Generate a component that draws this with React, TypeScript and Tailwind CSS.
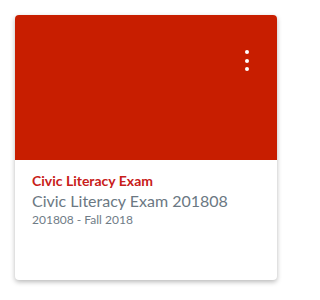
import React from "react";

export default function App() {
  return (
    <div className="w-[300px] h-[300px] bg-white pl-[15px] pt-[15px]" style={{ fontFamily: "Lato, 'Noto Sans', sans-serif" }}>
      <div className="relative w-[262px] h-[265px] rounded-[4px] bg-white overflow-hidden shadow-[0_2px_5px_rgba(0,0,0,0.28)] flex flex-col">
        <div className="h-[145px] bg-[#c81e00] shrink-0"></div>
        <div className="absolute left-[230px] top-[35px] flex flex-col gap-[4.5px]">
          <span className="block w-[4px] h-[4px] rounded-full bg-white"></span>
          <span className="block w-[4px] h-[4px] rounded-full bg-white"></span>
          <span className="block w-[4px] h-[4px] rounded-full bg-white"></span>
        </div>
        <div className="px-[17px] pt-[12px] flex flex-col">
          <div className="text-[14px] leading-[18px] font-bold text-[#c8201a] whitespace-nowrap">Civic Literacy Exam</div>
          <div className="text-[16px] leading-[22px] text-[#6b7883] whitespace-nowrap">Civic Literacy Exam 201808</div>
          <div className="text-[12px] leading-[15px] text-[#6f7c87] whitespace-nowrap">201808 - Fall 2018</div>
        </div>
      </div>
    </div>
  );
}
